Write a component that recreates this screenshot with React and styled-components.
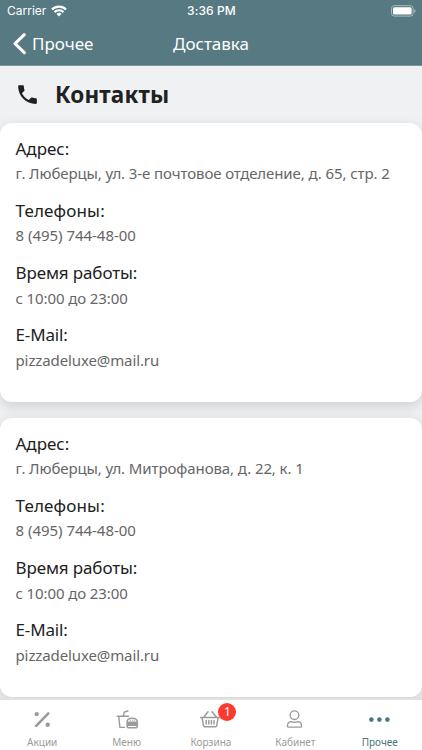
import React from 'react';
import styled, { createGlobalStyle } from 'styled-components';

const GlobalStyle = createGlobalStyle`
  * {
    box-sizing: border-box;
  }

  body {
    margin: 0;
    background: #f0f1f3;
    font-family: 'Noto Sans', 'Open Sans', sans-serif;
  }
`;

const Screen = styled.div`
  display: flex;
  flex-direction: column;
  width: 422px;
  height: 750px;
  overflow: hidden;
  background: #f0f1f3;
`;

const Header = styled.header`
  flex: none;
  height: 66px;
  background: #567982;
  border-bottom: 1px solid #7f97a3;
  color: #fff;
`;

const StatusBar = styled.div`
  display: grid;
  grid-template-columns: 1fr auto 1fr;
  align-items: center;
  height: 22px;
  padding: 0 6px 0 7px;
  font-family: Inter, sans-serif;
  font-size: 12px;
  line-height: 22px;
`;

const Carrier = styled.div`
  display: flex;
  align-items: center;
  gap: 5px;
`;

const Clock = styled.div`
  font-weight: 500;
  letter-spacing: 0.1px;
`;

const Battery = styled.svg`
  justify-self: end;
`;

const NavBar = styled.nav`
  display: grid;
  grid-template-columns: 1fr auto 1fr;
  align-items: center;
  height: 43px;
  padding: 0 13px;
  font-size: 17px;
  line-height: 24px;
`;

const Back = styled.a`
  display: flex;
  align-items: center;
  gap: 6px;
`;

const Content = styled.main`
  flex: 1;
  min-height: 0;
  overflow: hidden;
`;

const TitleRow = styled.div`
  display: flex;
  align-items: center;
  gap: 15px;
  height: 57px;
  padding: 0 0 1px 15px;
`;

const Title = styled.h1`
  margin: 0;
  padding-top: 1px;
  color: #212121;
  font-size: 22.5px;
  font-weight: 700;
  line-height: 30px;
  letter-spacing: 0.15px;
`;

const Card = styled.section`
  height: 279px;
  margin-bottom: 16px;
  padding: 12.6px 15.5px 0;
  border-radius: 12px;
  background: #fff;
  box-shadow: 0 4px 14px rgba(0, 0, 0, 0.14);
`;

const Field = styled.div`
  height: 62.3px;
  white-space: nowrap;
`;

const Label = styled.div`
  color: #212121;
  font-size: 17px;
  line-height: 25px;
  letter-spacing: ${props => props.$track || 0}px;
`;

const Value = styled.div`
  padding-top: 0.35px;
  color: #666;
  font-size: 15px;
  line-height: 25px;
  letter-spacing: ${props => props.$track || 0}px;
`;

const TabBar = styled.footer`
  display: grid;
  grid-template-columns: repeat(5, 1fr);
  flex: none;
  height: 52px;
  background: #fff;
  border-top: 2px solid #e1e1e2;
`;

const Tab = styled.a`
  display: flex;
  flex-direction: column;
  align-items: center;
  padding-top: 8px;
  color: ${props => (props.$active ? '#4c7580' : '#9b9b9b')};
`;

const TabIcon = styled.span`
  position: relative;
  height: 24px;
`;

const TabLabel = styled.span`
  margin-top: 3px;
  font-size: 10px;
  line-height: 14px;
`;

const Badge = styled.span`
  position: absolute;
  top: -5px;
  left: 19.5px;
  width: 18px;
  height: 18px;
  border-radius: 50%;
  background: #fc3b30;
  color: #fff;
  font-size: 12px;
  line-height: 18px;
  text-align: center;
`;

const WifiIcon = () => (
  <svg width="16" height="12" viewBox="0 0 16 12" fill="none" stroke="#fff" strokeWidth="2.2">
    <path d="M1 4.4a10 10 0 0 1 14 0" />
    <path d="M3.5 7.1a6.4 6.4 0 0 1 9 0" />
    <path d="M8 11.4 5.5 8.9a3.6 3.6 0 0 1 5 0z" fill="#fff" stroke="none" />
  </svg>
);

const BatteryIcon = () => (
  <Battery width="25" height="12" viewBox="0 0 25 12">
    <rect x="0.5" y="0.7" width="21.6" height="10.4" rx="2.8" fill="none" stroke="#a9bcc1" />
    <rect x="2" y="2.2" width="18.6" height="7.4" rx="1.5" fill="#fff" />
    <path d="M23.3 4v4q1.3-.6 1.3-2t-1.3-2z" fill="#a9bcc1" />
  </Battery>
);

const BackIcon = () => (
  <svg width="13" height="22" viewBox="0 0 13 22" fill="none" stroke="#fff" strokeWidth="3" strokeLinecap="round" strokeLinejoin="round">
    <path d="M11.3 1.7 2 10.7l9.3 9" />
  </svg>
);

const PhoneIcon = () => (
  <svg width="25" height="25" viewBox="0 0 24 24" fill="#212121">
    <path d="M6.62 10.79c1.44 2.83 3.76 5.14 6.59 6.59l2.2-2.2c.27-.27.67-.36 1.02-.24 1.12.37 2.33.57 3.57.57.55 0 1 .45 1 1V20c0 .55-.45 1-1 1-9.39 0-17-7.61-17-17 0-.55.45-1 1-1h3.5c.55 0 1 .45 1 1 0 1.25.2 2.45.57 3.57.11.35.03.74-.25 1.02l-2.2 2.2z" />
  </svg>
);

const PercentIcon = () => (
  <svg width="24" height="24" viewBox="0 0 24 24" fill="currentColor">
    <path d="M6.2 17.9 18.3 5.4" stroke="currentColor" strokeWidth="2.6" strokeLinecap="round" />
    <circle cx="6.7" cy="6.1" r="2.2" />
    <circle cx="17.7" cy="16.8" r="2.2" />
  </svg>
);

const MenuIcon = () => (
  <svg width="24" height="24" viewBox="0 0 24 24" fill="none" stroke="currentColor" strokeWidth="1.4" strokeLinecap="round" strokeLinejoin="round">
    <path d="M2.3 8.3h11.3M3.8 8.5l1.1 10.9h4.6M8.2 8l1.2-4 3.5-1" />
    <path d="M12 14.2c0-2.7 1.6-3.9 5.2-3.9s5.2 1.200 5.200 3.900zM12 17.200h10.400v.5q0 2.100-2.100 2.100h-6.200q-2.100 0-2.100-2.100zM11.700 15.700h11" />
    <path d="M15.2 12.4h.1M17.3 12.2h.1M19.3 12.4h.1" strokeWidth="1" />
  </svg>
);

const BasketIcon = () => (
  <svg width="24" height="24" viewBox="0 0 24 24" fill="none" stroke="currentColor" strokeWidth="1.5" strokeLinecap="round" strokeLinejoin="round">
    <path d="M1.6 9.6h19M3.1 9.8l1.4 7.9q.2 1 1.2 1h10.8q1 0 1.2-1l1.4-7.9M4.5 9.4l4.6-5.6M17.7 9.4l-4.6-5.6" />
    <path d="M7.2 12.6v3.5M9.8 12.6v3.5M12.4 12.6v3.5M15 12.6v3.5" />
  </svg>
);

const UserIcon = () => (
  <svg width="24" height="24" viewBox="0 0 24 24" fill="none" stroke="currentColor" strokeWidth="1.4" strokeLinejoin="round">
    <circle cx="11.5" cy="7.2" r="4.3" />
    <path d="M4.4 18.2c0-3.200 1.600-4.600 3.900-4.600q1.400.7 3.200.7t3.200-.7c2.300 0 3.900 1.400 3.900 4.600q0 .9-.9.9H5.300q-.9 0-.9-.9z" />
  </svg>
);

const DotsIcon = () => (
  <svg width="24" height="24" viewBox="0 0 24 24" fill="currentColor">
    <circle cx="3.4" cy="11.6" r="2.3" />
    <circle cx="11.4" cy="11.6" r="2.3" />
    <circle cx="19.4" cy="11.6" r="2.3" />
  </svg>
);

const makeFields = address => [
  { label: 'Адрес:', value: address, track: -0.09 },
  { label: 'Телефоны:', labelTrack: 0.15, value: '8 (495) 744-48-00', track: -0.03 },
  { label: 'Время работы:', labelTrack: -0.12, value: 'с 10:00 до 23:00', track: -0.1 },
  { label: 'E-Mail:', labelTrack: -0.15, value: 'pizzadeluxe@mail.ru', track: -0.11 }
];

const places = [
  { id: 1, fields: makeFields('г. Люберцы, ул. 3-е почтовое отделение, д. 65, стр. 2') },
  { id: 2, fields: makeFields('г. Люберцы, ул. Митрофанова, д. 22, к. 1') }
];

const tabs = [
  { label: 'Акции', icon: PercentIcon },
  { label: 'Меню', icon: MenuIcon },
  { label: 'Корзина', icon: BasketIcon, badge: 1 },
  { label: 'Кабинет', icon: UserIcon },
  { label: 'Прочее', icon: DotsIcon, active: true }
];

const App = () => (
  <Screen>
    <GlobalStyle />
    <Header>
      <StatusBar>
        <Carrier>Carrier <WifiIcon /></Carrier>
        <Clock>3:36 PM</Clock>
        <BatteryIcon />
      </StatusBar>
      <NavBar>
        <Back><BackIcon />Прочее</Back>
        <span>Доставка</span>
      </NavBar>
    </Header>
    <Content>
      <TitleRow>
        <PhoneIcon />
        <Title>Контакты</Title>
      </TitleRow>
      {places.map(place => (
        <Card key={place.id}>
          {place.fields.map(field => (
            <Field key={field.label}>
              <Label $track={field.labelTrack}>{field.label}</Label>
              <Value $track={field.track}>{field.value}</Value>
            </Field>
          ))}
        </Card>
      ))}
    </Content>
    <TabBar>
      {tabs.map(({ label, icon: Icon, badge, active }) => (
        <Tab key={label} $active={active}>
          <TabIcon>
            <Icon />
            {badge && <Badge>{badge}</Badge>}
          </TabIcon>
          <TabLabel>{label}</TabLabel>
        </Tab>
      ))}
    </TabBar>
  </Screen>
);

export default App;
